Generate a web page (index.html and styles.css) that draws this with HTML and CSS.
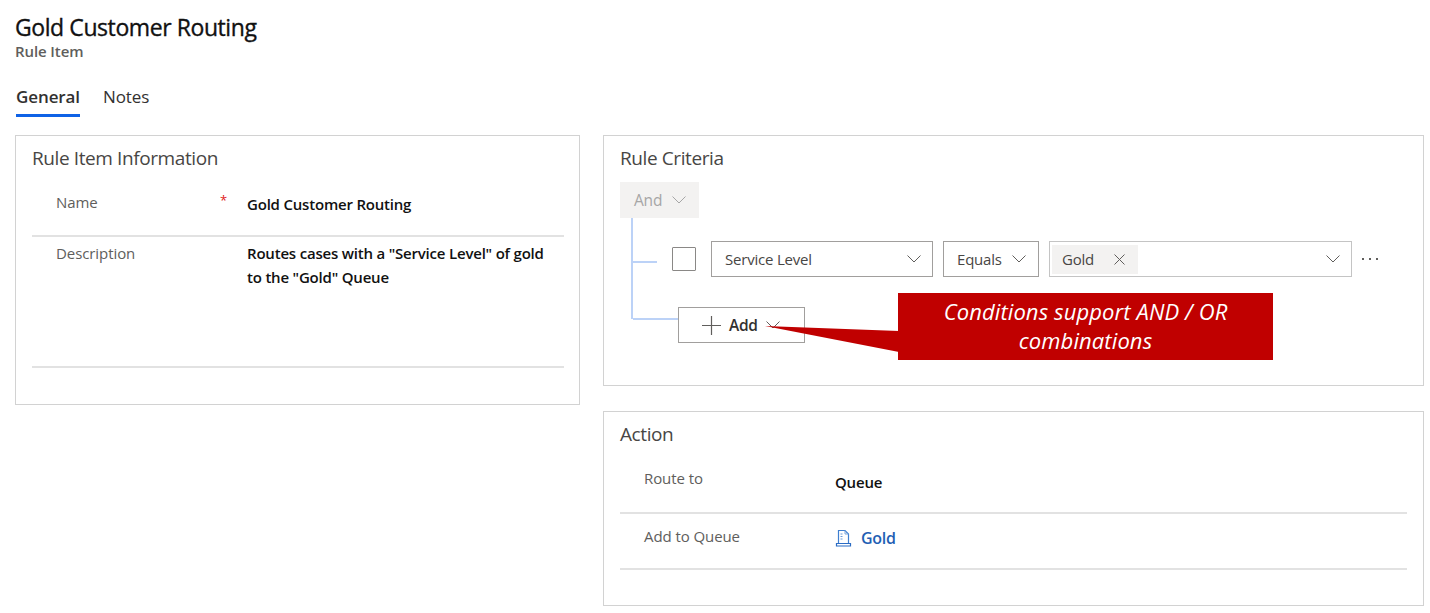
FILE: index.html
```html
<!DOCTYPE html>
<html lang="en">
<head>
<meta charset="utf-8">
<title>Gold Customer Routing</title>
<link rel="stylesheet" href="styles.css">
</head>
<body>
<div class="page">
  <header class="header">
    <h1 class="title">Gold Customer Routing</h1>
    <div class="subtitle">Rule Item</div>
  </header>
  <nav class="tabs">
    <span class="tab active">General</span>
    <span class="tab">Notes</span>
  </nav>
  <main class="columns">
    <section class="card info-card">
      <h2 class="card-title">Rule Item Information</h2>
      <div class="row name-row">
        <span class="label">Name</span>
        <span class="req">*</span>
        <span class="value">Gold Customer Routing</span>
      </div>
      <div class="row desc-row">
        <span class="label">Description</span>
        <span class="req"></span>
        <span class="value">Routes cases with a "Service Level" of gold<br>to the "Gold" Queue</span>
      </div>
    </section>
    <div class="right">
      <section class="card criteria-card">
        <h2 class="card-title">Rule Criteria</h2>
        <div class="and-btn">And
          <svg class="chev" width="14" height="8" viewBox="0 0 14 8"><path d="M.5.5 7 7l6.500-6.500" fill="none" stroke="#a6a6a6"/></svg>
        </div>
        <div class="tree">
          <div class="condition">
            <span class="checkbox"></span>
            <div class="select field-select">Service Level
              <svg class="chev" width="14" height="8" viewBox="0 0 14 8"><path d="M.5.5 7 7l6.500-6.500" fill="none" stroke="#605e5c"/></svg>
            </div>
            <div class="select op-select">Equals
              <svg class="chev" width="14" height="8" viewBox="0 0 14 8"><path d="M.5.5 7 7l6.500-6.500" fill="none" stroke="#605e5c"/></svg>
            </div>
            <div class="select value-select">
              <span class="tag">Gold
                <svg width="11" height="11" viewBox="0 0 11 11"><path d="M.5.5l10 10M10.500.5l-10 10" fill="none" stroke="#605e5c"/></svg>
              </span>
              <svg class="chev" width="14" height="8" viewBox="0 0 14 8"><path d="M.5.5 7 7l6.500-6.500" fill="none" stroke="#605e5c"/></svg>
            </div>
            <svg class="more" width="18" height="3" viewBox="0 0 18 3"><path d="M1 0h2v2H1zM8 0h2v2H8zM15 0h2v2h-2z" fill="#605e5c"/></svg>
          </div>
          <div class="add-btn">
            <svg width="19" height="19" viewBox="0 0 19 19"><path d="M0 9.500h19M9.500 0v19" fill="none" stroke="#605e5c" stroke-width="1.200"/></svg>
            <span>Add</span>
            <svg class="chev" width="14" height="8" viewBox="0 0 14 8"><path d="M.5.5 7 7l6.500-6.500" fill="none" stroke="#605e5c"/></svg>
          </div>
        </div>
      </section>
      <section class="card action-card">
        <h2 class="card-title">Action</h2>
        <div class="row route-row">
          <span class="label">Route to</span>
          <span class="value">Queue</span>
        </div>
        <div class="row queue-row">
          <span class="label">Add to Queue</span>
          <span class="value link">
            <svg width="17" height="18" viewBox="0 0 17 18"><path d="M3.500 14V1.500h6.500l3.500 3.500v9" fill="none" stroke="#3f7fd0" stroke-width="1.200"/><path d="M10 1.500V5h3.500" fill="none" stroke="#7aa6dc"/><path d="M1.500 14.500h14v2.500h-14z" fill="none" stroke="#2b6cc4" stroke-width="1.200"/><path d="M5.500 5h2M5.500 7.500h2M5.500 10h2" fill="none" stroke="#6a9bd8"/></svg>
            Gold
          </span>
        </div>
      </section>
    </div>
  </main>
</div>
<div class="callout">
  <svg class="callout-tail" width="135" height="40" viewBox="0 0 135 40"><path d="M0 0 134 5V26Z" fill="#c00000"/></svg>
  <div class="callout-box">Conditions support AND / OR<br>combinations</div>
</div>
</body>
</html>
```
FILE: styles.css
```css
* { box-sizing: border-box; }
html, body { margin: 0; padding: 0; background: #fff; }
body {
  width: 1430px;
  height: 613px;
  overflow: hidden;
  position: relative;
  font-family: "Open Sans", "Noto Sans", sans-serif;
  color: #201f1e;
}
.page { padding: 12px 6px 0 15px; }
.title {
  margin: 0;
  font-size: 23px;
  line-height: 31px;
  font-weight: 400;
  letter-spacing: -.42px;
  color: #111;
  -webkit-text-stroke: .35px #111;
}
.subtitle {
  font-size: 15px;
  line-height: 17px;
  font-weight: 600;
  letter-spacing: -.1px;
  color: #605e5c;
}
.tabs {
  display: flex;
  gap: 23px;
  margin-top: 27px;
  padding-left: 1px;
  height: 30px;
}
.tab {
  font-size: 17px;
  line-height: 20px;
  letter-spacing: -.1px;
  color: #323130;
  height: 30px;
}
.tab.active {
  font-weight: 600;
  border-bottom: 3px solid #0f62e6;
}
.columns {
  display: grid;
  grid-template-columns: 565px 821px;
  gap: 23px;
  margin-top: 18px;
  align-items: start;
}
.card {
  background: #fff;
  border: 1px solid #d2d2d2;
}
.card-title {
  margin: 0;
  font-size: 19px;
  line-height: 24px;
  font-weight: 400;
  letter-spacing: -.4px;
  color: #484644;
}
.info-card { height: 270px; padding: 10px 15px 0 16px; }
.right { display: grid; gap: 25px; }
.criteria-card { height: 251px; padding: 10px 16px 0; position: relative; }
.action-card { height: 195px; padding: 10px 16px 0; }
.row {
  display: flex;
  align-items: flex-start;
  border-bottom: 2px solid #e2e2e2;
}
.label {
  font-size: 15px;
  line-height: 20px;
  letter-spacing: -.08px;
  color: #605e5c;
}
.req {
  width: 27px;
  color: #e02020;
  font-size: 13px;
  line-height: 16px;
}
.value {
  font-size: 15px;
  line-height: 24px;
  font-weight: 600;
  letter-spacing: -.2px;
  color: #111;
}
.info-card .label { width: 164px; margin-left: 24px; }
.info-card .value { flex: 1; }
.name-row { height: 58px; padding-top: 13px; margin-top: 9px; }
.desc-row { height: 131px; padding-top: 6px; }
.desc-row .value { margin-top: -2px; }
.action-card .label { width: 191px; margin-left: 24px; }
.route-row { height: 67px; padding-top: 21px; margin-top: 1px; }
.route-row .value { margin-top: 2px; }
.queue-row { height: 56px; padding-top: 12px; }
.link {
  display: flex;
  align-items: center;
  gap: 9px;
  font-size: 16px;
  color: #1f5fb4;
  letter-spacing: -.3px;
}
.and-btn {
  display: flex;
  align-items: center;
  gap: 10px;
  width: 79px;
  height: 36px;
  margin-top: 12px;
  padding-left: 14px;
  background: #f3f2f1;
  color: #a6a6a6;
  font-size: 15.500px;
  letter-spacing: -.2px;
}
.tree {
  position: relative;
  padding-left: 52px;
  padding-top: 23px;
}
.tree::before {
  content: "";
  position: absolute;
  left: 11px;
  top: 0;
  width: 2px;
  height: 101px;
  background: #bcd2f7;
}
.tree::after {
  content: "";
  position: absolute;
  left: 13px;
  top: 100px;
  width: 46px;
  height: 2px;
  background: #bcd2f7;
}
.condition {
  display: flex;
  align-items: center;
  height: 36px;
  position: relative;
}
.condition::before {
  content: "";
  position: absolute;
  left: -39px;
  top: 20px;
  width: 24px;
  height: 2px;
  background: #bcd2f7;
}
.checkbox {
  width: 24px;
  height: 24px;
  border: 1.500px solid #8a8886;
  border-radius: 1px;
  margin-right: 15px;
  flex: none;
}
.select {
  display: flex;
  align-items: center;
  justify-content: space-between;
  height: 36px;
  border: 1.500px solid #a19f9d;
  font-size: 15px;
  letter-spacing: -.2px;
  color: #484644;
  flex: none;
}
.field-select { width: 222px; padding: 0 11px 0 13px; margin-right: 10px; }
.op-select { width: 96px; padding: 0 12px 0 13px; margin-right: 10px; }
.value-select { width: 303px; padding: 0 11px 0 2px; border-color: #c4c4c4; margin-right: 9px; }
.tag {
  display: flex;
  align-items: center;
  gap: 20px;
  width: 86px;
  height: 29px;
  padding-left: 10px;
  background: #f3f2f1;
}
.more { flex: none; margin-top: 1px; }
.add-btn {
  display: flex;
  align-items: center;
  width: 127px;
  height: 36px;
  margin-top: 30px;
  margin-left: 6px;
  padding-left: 23px;
  gap: 8px;
  border: 1.500px solid #a19f9d;
  font-size: 15.500px;
  font-weight: 600;
  letter-spacing: -.3px;
  color: #323130;
  background: #fff;
  position: relative;
  z-index: 1;
}
.callout {
  position: absolute;
  left: 765px;
  top: 293px;
  z-index: 2;
}
.callout-tail {
  position: absolute;
  left: 0;
  top: 33px;
  display: block;
}
.callout-box {
  position: absolute;
  left: 133px;
  top: 0;
  width: 375px;
  height: 67px;
  background: #c00000;
  color: #fff;
  font-size: 22px;
  font-style: italic;
  line-height: 29px;
  letter-spacing: .1px;
  text-align: center;
  padding-top: 4px;
}
```
